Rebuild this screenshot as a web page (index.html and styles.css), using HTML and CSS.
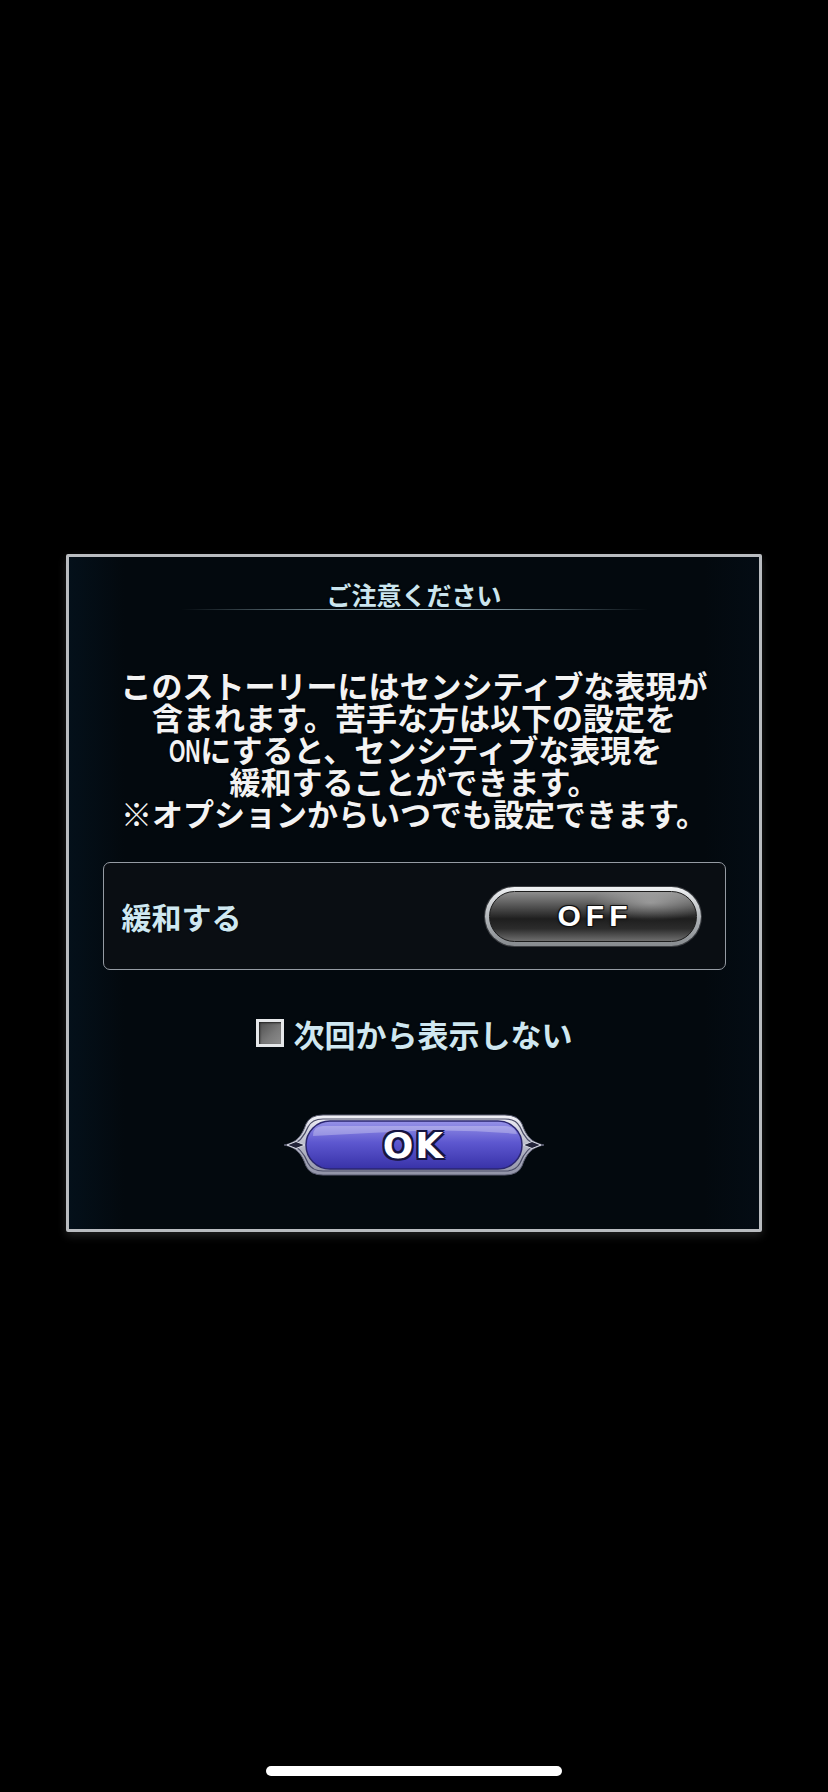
FILE: index.html
```html
<!DOCTYPE html>
<html lang="ja">
<head>
  <meta charset="UTF-8">
  <meta name="viewport" content="width=device-width, initial-scale=1.0">
  <title>ご注意ください</title>
  <link rel="stylesheet" href="styles.css">
</head>
<body>

  <div class="screen">
    <div class="dialog">
      <h1 class="dialog-title">ご注意ください</h1>
      <div class="title-rule"></div>

      <div class="notice">
        <div class="notice-line">このストーリーにはセンシティブな表現が</div>
        <div class="notice-line">含まれます。苦手な方は以下の設定を</div>
        <div class="notice-line"><span class="narrow">ON</span>にすると、センシティブな表現を</div>
        <div class="notice-line">緩和することができます。</div>
        <div class="notice-line">※オプションからいつでも設定できます。</div>
      </div>

      <div class="setting-box">
        <span class="setting-label">緩和する</span>
        <div class="toggle">
          <div class="toggle-face"><span>OFF</span></div>
        </div>
      </div>

      <label class="skip-row">
        <span class="check"></span>
        <span>次回から表示しない</span>
      </label>

      <div class="ok-row">
        <button class="ok-btn">
          <svg class="ok-frame" width="264" height="66" viewBox="0 0 264 66">
            <defs>
              <linearGradient id="silver" x1="0" y1="0" x2="0" y2="1">
                <stop offset="0" stop-color="#f2f2f8"/>
                <stop offset="0.5" stop-color="#b8bac8"/>
                <stop offset="1" stop-color="#9092a6"/>
              </linearGradient>
              <linearGradient id="blue" x1="0" y1="0" x2="0" y2="1">
                <stop offset="0" stop-color="#9692e8"/>
                <stop offset="0.45" stop-color="#5d57cf"/>
                <stop offset="1" stop-color="#3832a8"/>
              </linearGradient>
            </defs>
            <path d="M2,33 C14,31 20,24 24,12 Q28,3 41,3 L223,3 Q236,3 240,12 C244,24 250,31 262,33 C250,35 244,42 240,54 Q236,63 223,63 L41,63 Q28,63 24,54 C20,42 14,35 2,33 Z" fill="url(#silver)" stroke="#5a5c70" stroke-width="1"/>
            <path d="M9,33 C17,31 22,25 26,15 Q30,7 41,7 L223,7 Q234,7 238,15 C242,25 247,31 255,33 C247,35 242,41 238,51 Q234,59 223,59 L41,59 Q30,59 26,51 C22,41 17,35 9,33 Z" fill="none" stroke="#4a4c66" stroke-width="1.2"/>
            <rect x="24" y="9" width="216" height="48" rx="24" fill="url(#blue)" stroke="#2a2670" stroke-width="1.5"/>
            <path d="M41,14 L223,14 Q233,14 235,22 Q182,17 132,19 Q82,21 31,24 Q31,14 41,14 Z" fill="#ffffff" opacity="0.28"/>
            <path d="M5,33 L14,29.5 L23,33 L14,36.5 Z" fill="#23243a" stroke="#dadce6" stroke-width="1"/>
            <path d="M259,33 L250,29.5 L241,33 L250,36.5 Z" fill="#23243a" stroke="#dadce6" stroke-width="1"/>
          </svg>
          <span class="ok-label">OK</span>
        </button>
      </div>
    </div>

    <div class="home-bar"></div>
  </div>

</body>
</html>
```

FILE: styles.css
```css
body {
  margin: 0;
  background-color: #000;
  font-family: "Noto Sans CJK JP", "Noto Sans", sans-serif;
}

.screen {
  height: 1792px;
  display: flex;
  flex-direction: column;
  align-items: center;
}

.dialog {
  box-sizing: border-box;
  width: 696px;
  height: 678px;
  margin-top: 554px;
  padding-top: 22px;
  border: 3px solid #b9bcc0;
  border-radius: 2px;
  background: linear-gradient(90deg, #04101a 0%, #03090e 8%, #03090e 92%, #040c14 100%);
  box-shadow: 0 4px 8px rgba(70, 70, 70, 0.45);
  display: flex;
  flex-direction: column;
  align-items: center;
}

.dialog-title {
  margin: 0;
  font-size: 25px;
  line-height: 30px;
  font-weight: 700;
  color: #cbe5ee;
  text-shadow: 0 0 2px #000;
}

.title-rule {
  width: 467px;
  height: 1px;
  background: linear-gradient(90deg, rgba(150, 190, 206, 0), #bcdbe6 50%, rgba(150, 190, 206, 0));
}

.notice {
  margin-top: 59px;
  font-size: 31px;
  font-weight: 700;
  color: #f3f3f3;
  text-align: center;
  text-shadow: 0 0 2px #000;
}

.notice-line {
  height: 32px;
  line-height: 32px;
}

.narrow {
  display: inline-block;
  font-family: "Liberation Sans", sans-serif;
  transform: scaleX(0.68);
  transform-origin: right center;
  margin-left: -12px;
}

.setting-box {
  box-sizing: border-box;
  width: 623px;
  height: 108px;
  margin-top: 33px;
  padding: 0 24px 0 18px;
  border: 1.5px solid #959ba3;
  border-radius: 7px;
  background-color: #0a0e13;
  display: flex;
  align-items: center;
  justify-content: space-between;
}

.setting-label {
  font-size: 30px;
  font-weight: 700;
  color: #cfe8f1;
  text-shadow: 0 0 2px #000;
}

.toggle {
  box-sizing: border-box;
  width: 216px;
  height: 59px;
  padding: 4px;
  border-radius: 30px;
  background: linear-gradient(180deg, #f0f2f4, #aeb2b6 55%, #868a8e);
  box-shadow: 0 0 0 1px #3a3c40;
}

.toggle-face {
  box-sizing: border-box;
  height: 100%;
  border: 1px solid #1c1c1c;
  border-radius: 26px;
  background:
    radial-gradient(ellipse 60px 18px at 78% 22%, rgba(255, 255, 255, 0.35), rgba(255, 255, 255, 0)),
    linear-gradient(180deg, #8e8e8e 0%, #555 28%, #1e1e1e 55%, #2c2c2c 75%, #6e6e6e 100%);
  display: flex;
  align-items: center;
  justify-content: center;
}

.toggle-face span {
  padding-left: 5px;
  font-family: "Liberation Sans", sans-serif;
  font-size: 30px;
  font-weight: 700;
  letter-spacing: 5px;
  color: #fff;
  text-shadow: 1px 1px 0 #111, -1px -1px 0 #111, 1px -1px 0 #111, -1px 1px 0 #111, 0 0 3px #000;
}

.skip-row {
  height: 34px;
  margin-top: 46px;
  display: flex;
  align-items: center;
  gap: 10px;
  font-size: 31px;
  font-weight: 700;
  color: #cfe7f0;
  text-shadow: 0 0 2px #000;
}

.check {
  box-sizing: border-box;
  width: 28px;
  height: 28px;
  border: 3px solid #e6e8ea;
  background: linear-gradient(135deg, #4e4e4e, #7a7a7a 60%, #8c8c8c);
  box-shadow: inset 1px 1px 2px #222;
}

.ok-row {
  margin-top: 62px;
}

.ok-btn {
  position: relative;
  width: 264px;
  height: 66px;
  padding: 0;
  border: none;
  background: none;
  cursor: pointer;
  display: flex;
  align-items: center;
  justify-content: center;
}

.ok-frame {
  position: absolute;
  top: 0;
  left: 0;
}

.ok-label {
  position: relative;
  font-family: "DejaVu Sans", sans-serif;
  font-size: 36px;
  font-weight: 700;
  letter-spacing: 2px;
  color: #fff;
  text-shadow: 2px 2px 0 #161440, -2px -2px 0 #161440, 2px -2px 0 #161440, -2px 2px 0 #161440, 0 2px 0 #161440, 0 -2px 0 #161440, 2px 0 0 #161440, -2px 0 0 #161440;
}

.home-bar {
  width: 296px;
  height: 10px;
  margin-top: auto;
  margin-bottom: 16px;
  border-radius: 5px;
  background-color: #fff;
}
```
